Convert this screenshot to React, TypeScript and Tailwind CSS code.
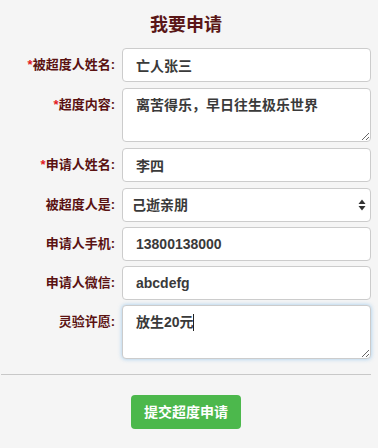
import React from "react";

const labelCls =
  "w-[115px] shrink-0 text-right text-[13px] font-bold text-[#5a1212] leading-[20px] whitespace-nowrap";
const boxCls =
  "block w-[249px] rounded-[4px] border border-[#cccccc] bg-white px-[13px] text-[14px] font-bold text-[#3a3a3a] outline-none";

function Label({ text, required }: { text: string; required?: boolean }) {
  return (
    <div className={labelCls}>
      {required && <span className="text-[#e3191b]">*</span>}
      {text}:
    </div>
  );
}

export default function App() {
  return (
    <div
      className="min-h-[448px] w-full bg-[#f5f5f5]"
      style={{ fontFamily: '"Liberation Sans", "Noto Sans CJK SC", sans-serif' }}
    >
      <div className="w-[372px] pt-[12px]">
        <h1 className="mb-[10px] h-[26px] text-center text-[18px] font-bold leading-[26px] text-[#5a1717]">
          我要申请
        </h1>

        <div className="flex flex-col">
          {/* 被超度人姓名 */}
          <div className="flex items-center gap-[7px]">
            <Label text="被超度人姓名" required />
            <input className={`${boxCls} h-[34px]`} defaultValue="亡人张三" />
          </div>

          {/* 超度内容 */}
          <div className="mt-[6px] flex items-start gap-[7px]">
            <div className="pt-[7px]">
              <Label text="超度内容" required />
            </div>
            <textarea
              className={`${boxCls} h-[54px] resize-y py-[6px] leading-[20px]`}
              defaultValue="离苦得乐，早日往生极乐世界"
            />
          </div>

          {/* 申请人姓名 */}
          <div className="mt-[6px] flex items-center gap-[7px]">
            <Label text="申请人姓名" required />
            <input className={`${boxCls} h-[34px]`} defaultValue="李四" />
          </div>

          {/* 被超度人是 */}
          <div className="mt-[6px] flex items-center gap-[7px]">
            <Label text="被超度人是" />
            <div className="relative">
              <select
                className={`${boxCls} h-[34px] appearance-none pl-[9px] font-semibold`}
                defaultValue="己逝亲朋"
              >
                <option>己逝亲朋</option>
                <option>冤亲债主</option>
                <option>堕胎婴灵</option>
              </select>
              <svg
                className="pointer-events-none absolute right-[5px] top-[11px]"
                width="8"
                height="12"
                viewBox="0 0 8 12"
              >
                <path d="M4 0.5 L7.5 5 L0.5 5 Z" fill="#333" />
                <path d="M4 11.5 L7.5 7 L0.5 7 Z" fill="#333" />
              </svg>
            </div>
          </div>

          {/* 申请人手机 */}
          <div className="mt-[5px] flex items-center gap-[7px]">
            <Label text="申请人手机" />
            <input className={`${boxCls} h-[34px]`} defaultValue="13800138000" />
          </div>

          {/* 申请人微信 */}
          <div className="mt-[5px] flex items-center gap-[7px]">
            <Label text="申请人微信" />
            <input className={`${boxCls} h-[34px]`} defaultValue="abcdefg" />
          </div>

          {/* 灵验许愿 */}
          <div className="mt-[5px] flex items-start gap-[7px]">
            <div className="pt-[7px]">
              <Label text="灵验许愿" />
            </div>
            <div className="relative">
              <textarea
                className={`${boxCls} h-[54px] resize-y border-[#66afe9] py-[6px] leading-[20px] shadow-[0_0_4px_rgba(102,175,233,0.6)]`}
                defaultValue="放生20元"
              />
              <span className="pointer-events-none absolute left-[71px] top-[9px] h-[17px] w-[1px] bg-[#222]" />
            </div>
          </div>
        </div>

        <hr className="mx-[1px] mt-[15px] border-t border-[#c8c8c8]" />

        <div className="flex justify-center pt-[20px]">
          <button className="h-[34px] w-[110px] rounded-[4px] bg-[#4cb84c] text-[14px] font-bold text-white">
            提交超度申请
          </button>
        </div>
      </div>
    </div>
  );
}
